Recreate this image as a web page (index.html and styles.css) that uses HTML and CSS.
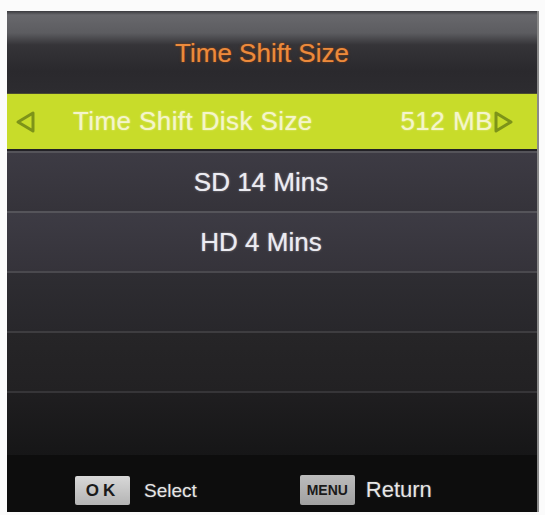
FILE: index.html
```html
<!DOCTYPE html>
<html lang="en">

<head>
    <meta charset="UTF-8">
    <title>Time Shift Size</title>
    <link rel="stylesheet" href="styles.css">
</head>

<body>
    <!-- TV on-screen menu -->
    <div class="screen">
        <div class="title">Time Shift Size</div>

        <div class="row selected">
            <svg class="arrow" width="22" height="26" viewBox="0 0 22 26">
                <polygon points="19,4 19,22 4,13" fill="none" stroke="#7d9319" stroke-width="3" stroke-linejoin="round"/>
            </svg>
            <span class="label">Time Shift Disk Size</span>
            <span class="value">512 MB</span>
            <svg class="arrow" width="22" height="26" viewBox="0 0 22 26">
                <polygon points="3,4 3,22 18,13" fill="none" stroke="#7d9319" stroke-width="3" stroke-linejoin="round"/>
            </svg>
        </div>
        <div class="row">SD 14 Mins</div>
        <div class="row">HD 4 Mins</div>
        <div class="row empty"></div>
        <div class="row empty dark"></div>
        <div class="row empty darker"></div>

        <div class="footer">
            <div class="hint select"><span class="key">OK</span>Select</div>
            <div class="hint"><span class="key menu">MENU</span>Return</div>
        </div>
    </div>
</body>

</html>
```

FILE: styles.css
```css
body {
    margin: 0;
    background-color: #fbfbfb;
    font-family: "Liberation Sans", Arial, sans-serif;
}

.screen {
    width: 532px;
    height: 501px;
    margin: 11px 0 0 7px;
    background: #1c1b1d;
    display: flex;
    flex-direction: column;
    border-right: 2px solid #8a8a8a;
    box-sizing: border-box;
}

.title {
    height: 82px;
    flex-shrink: 0;
    display: flex;
    align-items: center;
    justify-content: center;
    font-size: 26px;
    color: #ec8a3c;
    text-shadow: 0 0 1px #a0521e, 0 0 3px #6a3a1a;
    padding: 2px 20px 0 0;
    box-sizing: border-box;
    background: linear-gradient(to bottom, #3a3a3e 0px, #68686c 4px, #5c5c60 22px, #353438 34px, #2a292d 60px, #2d2c30 82px);
}

.row {
    height: 60px;
    flex-shrink: 0;
    display: flex;
    align-items: center;
    justify-content: center;
    font-size: 26px;
    color: #ececf2;
    text-shadow: 0 0 1px rgba(255, 255, 255, 0.6), 0 0 3px rgba(255, 255, 255, 0.25);
    padding-right: 22px;
    box-sizing: border-box;
    border-top: 2px solid #55545a;
    background: linear-gradient(to bottom, #3d3b44, #35333a);
}

.row.selected {
    height: 58px;
    border-top: 1px solid #4a4c30;
    border-bottom: 2px solid #222126;
    background: #c8dc2a;
    color: #f4f5cc;
    justify-content: flex-start;
    padding: 0 22px 0 7px;
    text-shadow: 0 0 2px rgba(250, 250, 200, 0.7);
}

.selected .arrow {
    flex-shrink: 0;
}

.selected .label {
    margin-left: 37px;
    flex: 1;
    letter-spacing: 0.4px;
}

.selected .value {
    letter-spacing: 0.5px;
}

.row.empty {
    background: linear-gradient(to bottom, #2e2d32, #28272b);
    border-top-color: #4a494e;
}

.row.dark {
    background: linear-gradient(to bottom, #262527, #222123);
    border-top-color: #3e3d40;
}

.row.darker {
    height: 64px;
    background: linear-gradient(to bottom, #1f1e20, #161617);
    border-top-color: #363538;
}

.footer {
    flex: 1;
    background: #0d0d0d;
    display: flex;
    align-items: flex-end;
    padding: 0 0 7px 68px;
    gap: 103px;
    box-sizing: border-box;
}

.hint {
    display: flex;
    align-items: center;
    color: #e6e6e6;
    font-size: 22px;
    text-shadow: 0 0 2px rgba(255, 255, 255, 0.3);
}

.hint.select {
    font-size: 19px;
}

.key {
    display: inline-block;
    width: 55px;
    height: 29px;
    line-height: 29px;
    margin-right: 14px;
    background: linear-gradient(to bottom, #d8d8d8, #b4b4b4);
    color: #1a1a1a;
    font-size: 17px;
    font-weight: bold;
    text-align: center;
    letter-spacing: 4px;
    border-radius: 2px;
    text-shadow: none;
}

.key.menu {
    font-size: 14px;
    letter-spacing: 0;
    height: 30px;
    line-height: 30px;
    background: linear-gradient(to bottom, #bcbcbc, #a0a0a0);
    margin-right: 11px;
}
```
